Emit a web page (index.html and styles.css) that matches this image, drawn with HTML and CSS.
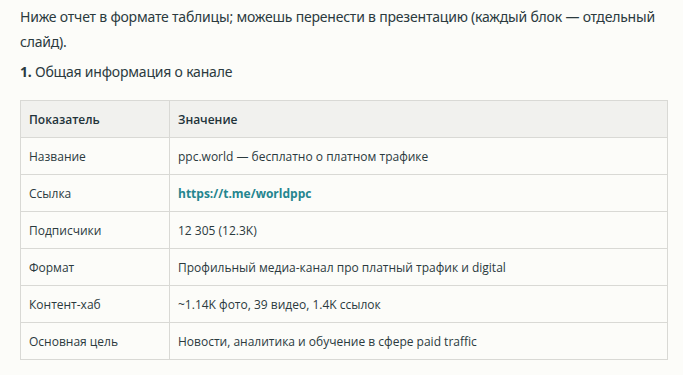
FILE: index.html
```html
<!DOCTYPE html>
<html lang="ru">
<head>
<meta charset="utf-8">
<link rel="stylesheet" href="styles.css">
</head>
<body>
<div class="content">
  <p class="intro">Ниже отчет в формате таблицы; можешь перенести в презентацию (каждый блок — отдельный слайд).</p>
  <p class="section"><b>1.</b> Общая информация о канале</p>
  <table class="report">
    <thead>
      <tr><th class="c1">Показатель</th><th>Значение</th></tr>
    </thead>
    <tbody>
      <tr><td>Название</td><td>ppc.world — бесплатно о платном трафике</td></tr>
      <tr><td>Ссылка</td><td><a class="link" href="#">https://t.me/worldppc</a></td></tr>
      <tr><td>Подписчики</td><td>12 305 (12.3K)</td></tr>
      <tr><td>Формат</td><td>Профильный медиа-канал про платный трафик и digital</td></tr>
      <tr><td>Контент-хаб</td><td>~1.14K фото, 39 видео, 1.4K ссылок</td></tr>
      <tr><td>Основная цель</td><td>Новости, аналитика и обучение в сфере paid traffic</td></tr>
    </tbody>
  </table>
</div>
</body>
</html>
```
FILE: styles.css
```css
html, body {
  margin: 0;
  padding: 0;
  background: #fcfcf9;
}
body {
  color: #2b3a3e;
  font-family: "Open Sans", "Noto Sans", sans-serif;
}
.content {
  padding: 4px 16px 0 20px;
}
.intro {
  margin: 0;
  font-family: "Noto Sans", sans-serif;
  font-size: 14px;
  line-height: 25px;
  letter-spacing: -0.2px;
}
.section {
  margin: 5px 0 0;
  font-family: "Noto Sans", sans-serif;
  font-size: 14px;
  line-height: 25px;
  letter-spacing: -0.2px;
}
.section b {
  font-weight: 700;
}
.report {
  margin-top: 16px;
  width: 648px;
  border-collapse: collapse;
  font-size: 12px;
}
.report th, .report td {
  border: 1px solid #d9d9d5;
  height: 37px;
  padding: 0 8px;
  text-align: left;
  vertical-align: middle;
  box-sizing: border-box;
}
.report th {
  background: #f1f1ee;
  font-weight: 600;
  color: #22333a;
}
.report .c1 {
  width: 149px;
}
.link {
  color: #24858f;
  font-weight: 700;
  text-decoration: none;
}
```
